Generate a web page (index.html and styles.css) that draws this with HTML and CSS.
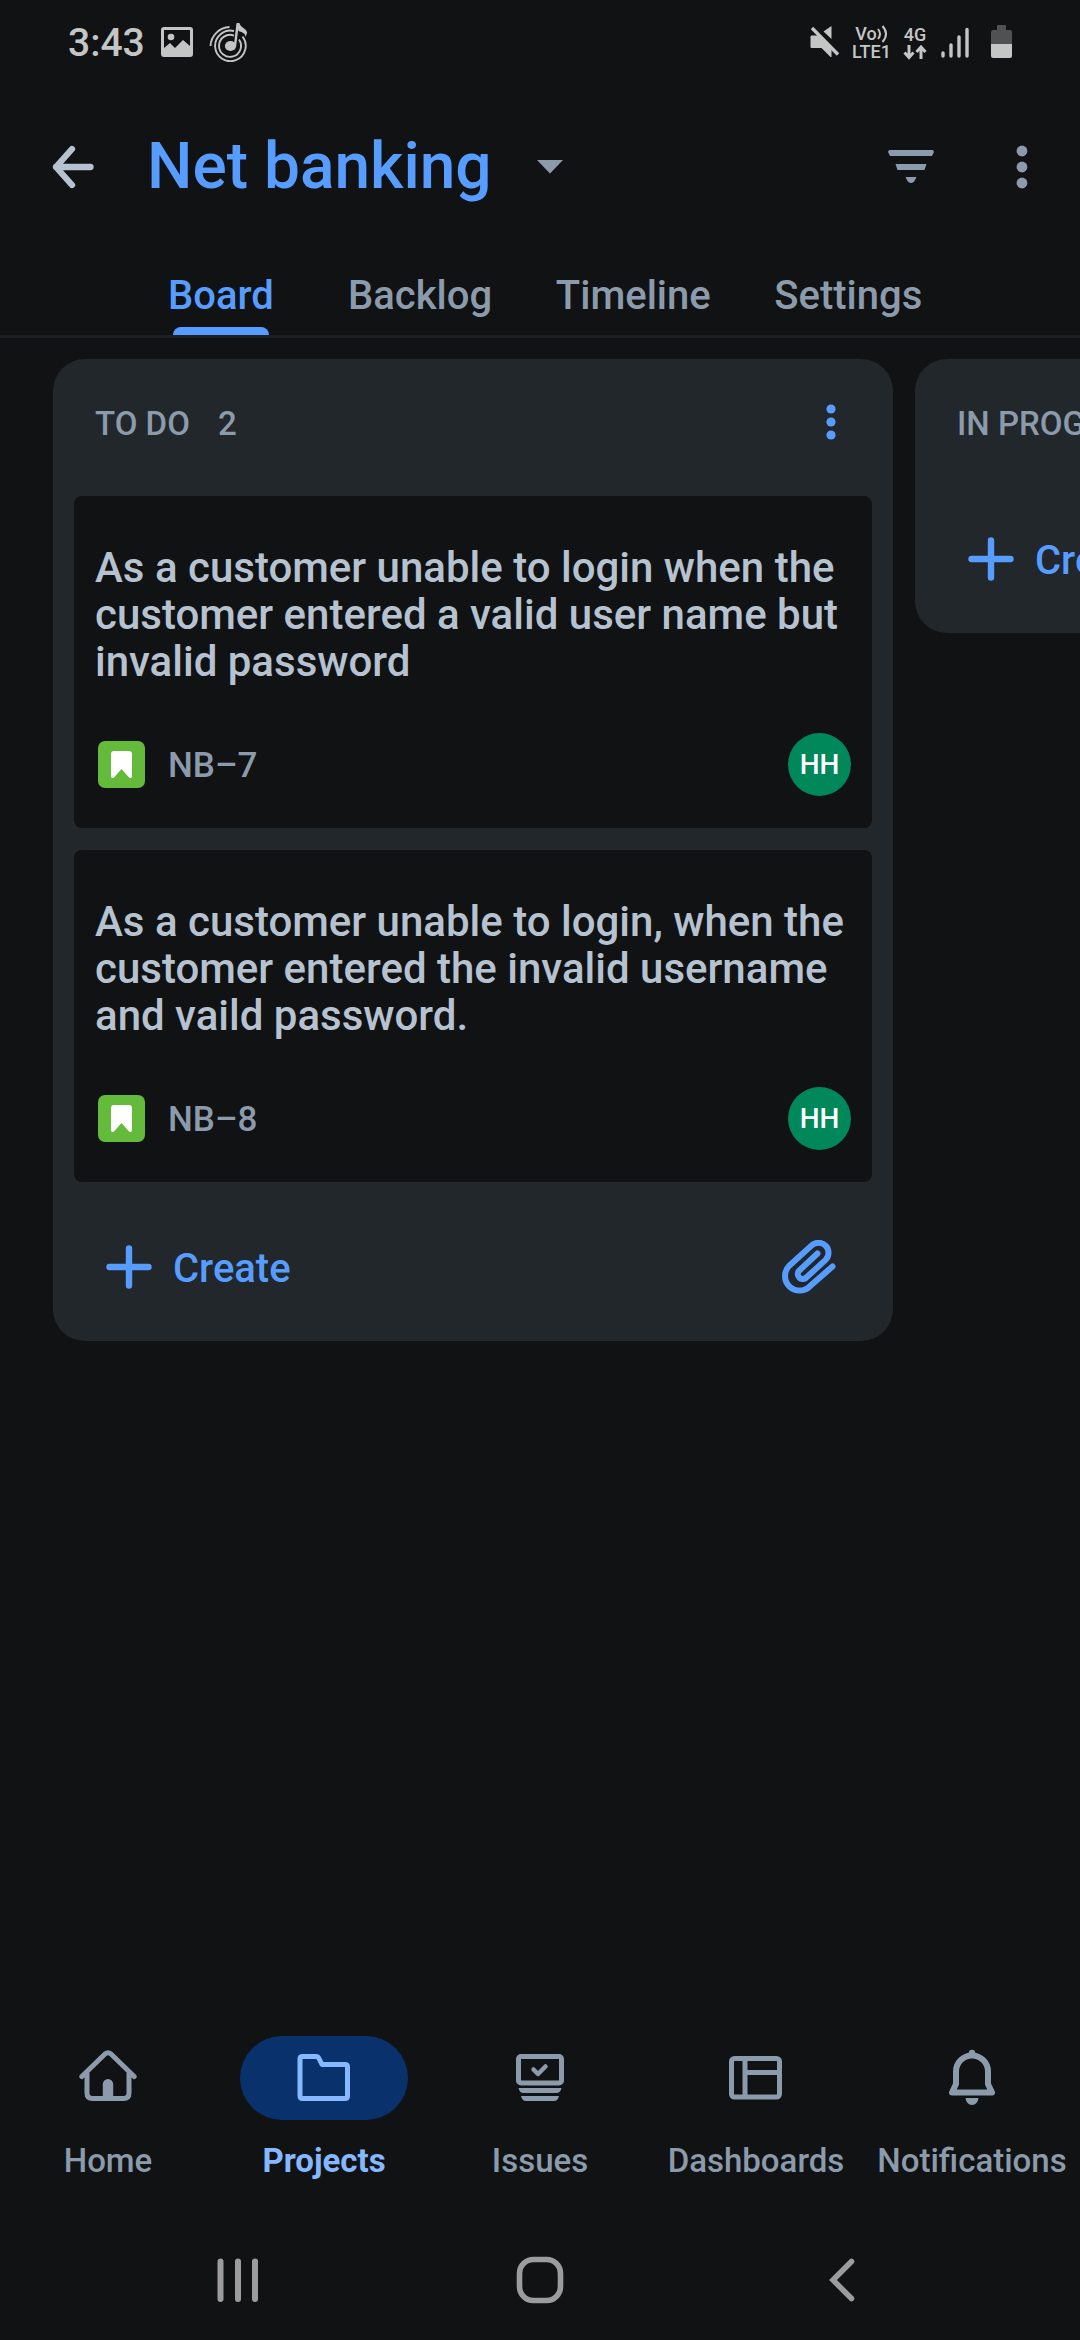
FILE: index.html
```html
<!DOCTYPE html>
<html lang="en">
<head>
<meta charset="utf-8">
<meta name="viewport" content="width=device-width, initial-scale=1">
<title>Net banking</title>
<link rel="stylesheet" href="styles.css">
</head>
<body>
<div class="status-bar">
  <div class="status-left">
    <span class="clock">3:43</span>
    <svg width="32" height="30" viewBox="0 0 32 30" aria-hidden="true"><path fill="currentColor" fill-rule="evenodd" d="M3 0h26a3 3 0 0 1 3 3v24a3 3 0 0 1-3 3H3a3 3 0 0 1-3-3V3a3 3 0 0 1 3-3zm0 3v18l6-5 5 5 8-8 7 6V3z"/><circle cx="10" cy="10" r="3.3" fill="currentColor"/></svg>
    <svg width="38" height="40" viewBox="0 0 38 40" fill="none" stroke="currentColor" stroke-width="1.9" aria-hidden="true"><path d="M1.5 24A20 20 0 0 1 20.500 5"/><path d="M25 9A15.300 15.300 0 1 0 33.500 14.500"/><path d="M25 13.600A11 11 0 1 0 30 17.500"/><ellipse cx="21.500" cy="24" rx="5.600" ry="5" fill="currentColor" stroke="none"/><path stroke-width="2.400" d="M26 24 28.600 2"/><path fill="currentColor" stroke="none" d="M27.500 1h3c0 4 8 6 7.500 10l-1.500 4c0-4-4-5-7-6z"/></svg>
  </div>
  <div class="status-right">
    <svg width="30" height="32" viewBox="0 0 30 32" aria-hidden="true"><path fill="currentColor" d="M21.500 0v13l-8-7.500zM1.500 9.500h7L21.500 22v9h-1l-9-9H1.500a1 1 0 0 1-1-1v-10.500a1 1 0 0 1 1-1z"/><path stroke="currentColor" stroke-width="3.400" d="m2 2 26 26.500"/></svg>
    <span class="volte"><span class="volte-top">Vo<svg width="11" height="18" viewBox="0 0 11 18" fill="none" stroke="currentColor" stroke-width="2" aria-hidden="true"><path d="M1 4q4 5 0 10M5.500 1q7 8 0 16"/></svg></span><span>LTE1</span></span>
    <span class="network"><span>4G</span><svg width="24" height="15" viewBox="0 0 24 15" fill="none" stroke="currentColor" stroke-width="3" aria-hidden="true"><path d="M6 0v12M1.500 7.500 6 12.500l4.500-5M18 14V2M13.500 7 18 2l4.500 5"/></svg></span>
    <svg class="signal" width="28" height="31" viewBox="0 0 28 31" stroke="currentColor" stroke-width="3.400" stroke-linecap="round" aria-hidden="true"><path d="M2 26v3M10 18v11M18 10v19M26 2.500v26.500"/></svg>
    <svg class="battery" width="21" height="34" viewBox="0 0 21 34" aria-hidden="true"><path fill="#505152" d="M6 1a1 1 0 0 1 1-1h7a1 1 0 0 1 1 1v4h4a2 2 0 0 1 2 2v13H0V7a2 2 0 0 1 2-2h4z"/><path fill="currentColor" d="M0 19h21v12a2 2 0 0 1-2 2H2a2 2 0 0 1-2-2z"/></svg>
  </div>
</div>

<header class="app-bar">
  <button class="icon-button back" type="button" aria-label="Back"><svg width="42" height="44" viewBox="0 0 42 44" fill="none" stroke="currentColor" stroke-width="6.300" stroke-linecap="round" stroke-linejoin="round"><path d="M38.500 22H4M20 4 4 22l16 18"/></svg></button>
  <h1 class="title"><button class="title-button" type="button">Net banking<svg width="26" height="14" viewBox="0 0 26 14" aria-hidden="true"><path fill="#8c9bab" d="M0 0h26L13 13.500z"/></svg></button></h1>
  <button class="icon-button" type="button" aria-label="Filter"><svg width="46" height="34" viewBox="0 0 46 34" fill="currentColor"><path d="M1 0h44l1 2-2 4H2L0 2zM7.500 14h31l-2 6h-27zM17.500 27h11l-2 4q-1 2-3.500 2t-3.500-2z"/></svg></button>
  <button class="icon-button more" type="button" aria-label="More options"><svg width="12" height="44" viewBox="0 0 12 44" fill="currentColor"><circle cx="6" cy="6" r="5.400"/><circle cx="6" cy="22" r="5.400"/><circle cx="6" cy="38" r="5.400"/></svg></button>
</header>

<nav class="tabs" aria-label="Project views">
  <a class="tab active" href="#board" aria-current="page">Board</a>
  <a class="tab" href="#backlog">Backlog</a>
  <a class="tab" href="#timeline">Timeline</a>
  <a class="tab" href="#settings">Settings</a>
</nav>

<main class="board" id="board">
  <section class="column">
    <div class="column-head">
      <h2>TO DO</h2><span class="count">2</span>
      <button class="icon-button column-more" type="button" aria-label="Column options"><svg width="10" height="40" viewBox="0 0 10 40" fill="currentColor"><circle cx="5" cy="5" r="4.600"/><circle cx="5" cy="18" r="4.600"/><circle cx="5" cy="31" r="4.600"/></svg></button>
    </div>
    <article class="card">
      <h3>As a customer unable to login when the customer entered a valid user name but invalid password</h3>
      <div class="card-foot">
        <svg width="47" height="47" viewBox="0 0 47 47" aria-hidden="true"><rect width="47" height="47" rx="7" fill="#64ba3b"/><path fill="#fff" d="M16 10h15a3 3 0 0 1 3 3v22q0 3-3 1.500L23.500 28 16 36.500q-3 1.500-3-1.500V13a3 3 0 0 1 3-3z"/></svg>
        <span class="key">NB–7</span><span class="avatar">HH</span>
      </div>
    </article>
    <article class="card">
      <h3>As a customer unable to login, when the customer entered the invalid username and vaild password.</h3>
      <div class="card-foot">
        <svg width="47" height="47" viewBox="0 0 47 47" aria-hidden="true"><rect width="47" height="47" rx="7" fill="#64ba3b"/><path fill="#fff" d="M16 10h15a3 3 0 0 1 3 3v22q0 3-3 1.500L23.500 28 16 36.500q-3 1.500-3-1.500V13a3 3 0 0 1 3-3z"/></svg>
        <span class="key">NB–8</span><span class="avatar">HH</span>
      </div>
    </article>
    <div class="column-foot">
      <button class="create" type="button"><svg width="46" height="44" viewBox="0 0 46 44" stroke="currentColor" stroke-width="6.400" stroke-linecap="round" aria-hidden="true"><path d="M3.500 22h39M23 3.500v37"/></svg><span>Create</span></button>
      <button class="icon-button" type="button" aria-label="Attach"><svg width="54" height="54" viewBox="0 0 54 54" fill="none" stroke="currentColor" stroke-width="6" stroke-linecap="round"><path d="M50.500 26.500 27.900 46.300A14.500 14.500 0 0 1 7.300 25.700L29.400 5.700A10 10 0 0 1 43.600 19.900L23.800 38A5 5 0 0 1 16.800 31L35.500 13.500"/></svg></button>
    </div>
  </section>
  <section class="column">
    <div class="column-head"><h2>IN PROGRESS</h2></div>
    <div class="column-foot">
      <button class="create" type="button"><svg width="46" height="44" viewBox="0 0 46 44" stroke="currentColor" stroke-width="6.400" stroke-linecap="round" aria-hidden="true"><path d="M3.500 22h39M23 3.500v37"/></svg><span>Create</span></button>
    </div>
  </section>
</main>

<nav class="bottom-nav" aria-label="Main">
  <a class="nav-item" href="#home"><span class="nav-icon"><svg width="58" height="56" viewBox="0 0 58 56" fill="none" stroke="currentColor" stroke-width="5" stroke-linecap="round" stroke-linejoin="round"><path d="M2.800 26.500 26 4q3-2.500 6 0L55.200 26.500M8 23v20q0 5.500 5.500 5.500h31q5.500 0 5.500-5.500V23"/><path fill="currentColor" stroke="none" d="M23.800 49V34.200a5.200 5.200 0 0 1 10.400 0V49z"/></svg></span>Home</a>
  <a class="nav-item active" href="#projects" aria-current="page"><span class="nav-icon"><svg width="54" height="48" viewBox="0 0 54 48" fill="none" stroke="currentColor" stroke-width="5" stroke-linejoin="round"><path d="M5.500 2.500H19q2 0 3 2l3 6h23q2.500 0 2.500 2.500v29q0 2.500-2.500 2.500H5.500Q3 44.500 3 42V5q0-2.500 2.500-2.500z"/></svg></span>Projects</a>
  <a class="nav-item" href="#issues"><span class="nav-icon"><svg width="48" height="48" viewBox="0 0 48 48" fill="none" stroke="currentColor" stroke-width="5" stroke-linecap="round" stroke-linejoin="round"><rect x="2.500" y="2.500" width="43" height="26.500" rx="2.500"/><path stroke-width="4.500" d="m17.500 15.500 4.500 4.500 7.500-7.500"/><path fill="currentColor" stroke="none" d="M2.500 34h43q-1 5-5 5h-33q-4 0-5-5zM5 42h38q-1 5-5 5H10q-4 0-5-5z"/></svg></span>Issues</a>
  <a class="nav-item" href="#dashboards"><span class="nav-icon"><svg width="54" height="44" viewBox="0 0 54 44" fill="none" stroke="currentColor" stroke-width="5"><rect x="2.500" y="2.500" width="48" height="38.500" rx="3"/><path d="M16 2.500V41M16 16.500h35"/></svg></span>Dashboards</a>
  <a class="nav-item" href="#notifications"><span class="nav-icon"><svg width="46" height="58" viewBox="0 0 46 58" fill="none" stroke="currentColor" stroke-width="6" stroke-linejoin="round"><path d="M7 35V22.500a16 16 0 0 1 32 0V35l4 8.500H3z"/><circle cx="23" cy="4" r="3.200" fill="currentColor" stroke="none"/><path fill="currentColor" stroke="none" d="M16.500 49h13q-1 7-6.500 7t-6.500-7z"/></svg></span>Notifications</a>
</nav>

<div class="system-bar">
  <button class="icon-button" type="button" aria-label="Recent apps"><svg width="42" height="44" viewBox="0 0 42 44" stroke="currentColor" stroke-width="6" stroke-linecap="round"><path d="M3.500 3.500v37.500M21 3.500v37.500M38 3.500v37.500"/></svg></button>
  <button class="icon-button" type="button" aria-label="Home screen"><svg width="48" height="48" viewBox="0 0 48 48" fill="none" stroke="currentColor" stroke-width="5.600"><rect x="3.500" y="3.500" width="41" height="41" rx="14"/></svg></button>
  <button class="icon-button" type="button" aria-label="Go back"><svg width="26" height="44" viewBox="0 0 26 44" fill="none" stroke="currentColor" stroke-width="5.600" stroke-linecap="round"><path d="M22.500 3.500 4 22l18.500 18.500"/></svg></button>
</div>
</body>
</html>
```
FILE: styles.css
```css
:root {
  --bg: #101214;
  --surface: #22272b;
  --text: #b6c2cf;
  --muted: #8c9bab;
  --blue: #579dff;
  --status: #c4c5c5;
}

* { box-sizing: border-box; }

body {
  margin: 0;
  min-height: 100vh;
  display: flex;
  flex-direction: column;
  background: var(--bg);
  color: var(--text);
  font-family: Roboto, "Noto Sans", sans-serif;
  font-weight: 500;
  overflow-x: hidden;
}

h1, h2, h3 { margin: 0; font-weight: 500; }
a { color: inherit; text-decoration: none; }
svg { display: block; flex: none; }

button {
  padding: 0;
  border: 0;
  background: none;
  color: inherit;
  font: inherit;
  cursor: pointer;
}

/* Status bar */
.status-bar {
  display: flex;
  align-items: center;
  justify-content: space-between;
  height: 84px;
  padding: 0 68px;
  color: var(--status);
}
.status-left, .status-right { display: flex; align-items: center; }
.status-left { gap: 16px; }
.clock { padding-top: 2px; font-size: 39px; line-height: 48px; }
.status-right { gap: 12px; }
.volte, .network {
  display: flex;
  flex-direction: column;
  align-items: center;
  padding-top: 1px;
  font-size: 18px;
  line-height: 18px;
}
.volte-top { display: flex; }
.network { gap: 1px; }
.signal { margin-left: 2px; }
.battery { margin-left: 10px; }

/* App bar */
.app-bar {
  display: flex;
  align-items: center;
  height: 166px;
  padding: 0 52px;
}
.back { margin-right: 53px; }
.title { flex: 1; font-size: 64px; line-height: 76px; color: var(--blue); }
.title-button { display: flex; align-items: center; gap: 45px; }
.icon-button { display: flex; align-items: center; justify-content: center; }
.app-bar .icon-button { color: var(--muted); }
.app-bar .back { color: var(--text); }
.more { margin-left: 82px; }

/* Tabs */
.tabs {
  display: flex;
  gap: 65px;
  padding: 0 159px;
  border-bottom: 3px solid #1d2023;
  color: var(--muted);
  font-size: 40px;
  line-height: 48px;
}
.tab {
  position: relative;
  min-width: 124px;
  padding: 22px 0 15px;
  text-align: center;
}
.tab.active { color: var(--blue); }
.tab.active::after {
  content: "";
  position: absolute;
  inset: auto 14px 0;
  height: 8px;
  border-radius: 8px 8px 0 0;
  background: var(--blue);
}

/* Board */
.board {
  flex: 1;
  display: flex;
  align-items: flex-start;
  gap: 22px;
  padding: 21px 53px;
  overflow-x: auto;
  scrollbar-width: none;
}
.column {
  flex: 0 0 840px;
  padding: 0 21px;
  border-radius: 32px;
  background: var(--surface);
}
.column-head {
  display: flex;
  align-items: center;
  height: 137px;
  padding: 0 36px 8px 21px;
  color: var(--muted);
  font-size: 33px;
  line-height: 38px;
}
.column-head h2 { font-size: inherit; }
.count { margin-left: 28px; }
.column-more { margin-left: auto; color: var(--blue); }

.card {
  margin-bottom: 22px;
  padding: 48px 21px 32px;
  border-radius: 8px;
  background: var(--bg);
}
.card h3 { font-size: 42px; line-height: 47px; }
.card-foot { display: flex; align-items: center; margin-top: 48px; padding-left: 3px; }
.key { margin-left: 23px; padding-top: 2px; color: var(--muted); font-size: 35px; line-height: 42px; }
.avatar {
  display: grid;
  place-items: center;
  width: 63px;
  height: 63px;
  margin-left: auto;
  border-radius: 50%;
  background: #00875a;
  color: #fff;
  font-size: 28px;
}

.column-foot {
  display: flex;
  align-items: center;
  justify-content: space-between;
  height: 137px;
  padding: 0 36px 12px 32px;
  color: var(--blue);
}
.create { display: flex; align-items: center; gap: 21px; font-size: 40px; line-height: 48px; }
.create span { padding-top: 5px; }

/* Bottom navigation */
.bottom-nav {
  display: grid;
  grid-template-columns: repeat(5, 1fr);
  padding-bottom: 40px;
  color: var(--muted);
  font-size: 33px;
  line-height: 38px;
}
.nav-item {
  display: flex;
  flex-direction: column;
  align-items: center;
  gap: 22px;
}
.nav-icon {
  display: grid;
  place-items: center;
  width: 168px;
  height: 84px;
  border-radius: 42px;
}
.nav-item.active { color: #85b8ff; font-weight: 700; }
.nav-item.active .nav-icon { background: #09326c; }

/* System navigation */
.system-bar {
  display: grid;
  grid-template-columns: repeat(3, 1fr);
  place-items: center;
  height: 120px;
  padding: 0 8%;
  color: #9c9c9d;
}
```
